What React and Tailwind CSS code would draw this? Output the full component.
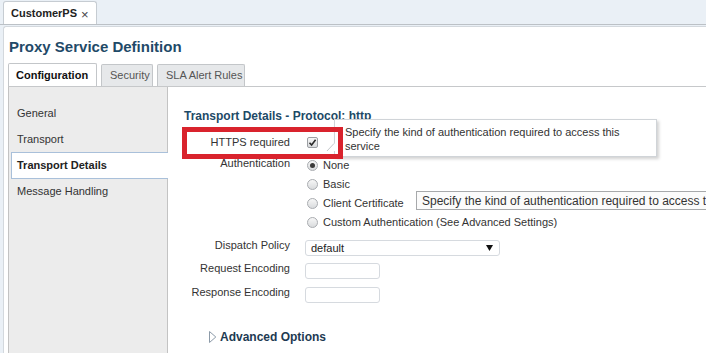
import React from "react";

function Radio({ checked }) {
  return (
    <span className="relative w-[11px] h-[11px] rounded-full border border-[#a9acb0] bg-gradient-to-b from-[#f7f7f7] to-[#d9dbdd] flex items-center justify-center shrink-0">
      {checked && <span className="w-[5px] h-[5px] rounded-full bg-[#3a3a3a]" />}
    </span>
  );
}

function RadioRow({ label, checked }) {
  return (
    <div className="h-[19px] flex items-center">
      <Radio checked={checked} />
      <span className="ml-[5px] text-[11px] text-[#333] whitespace-nowrap">{label}</span>
    </div>
  );
}

export default function App() {
  return (
    <div className="relative w-[706px] h-[353px] overflow-hidden bg-[#eaf0f6] flex flex-col text-[11px] text-[#333] font-['Liberation_Sans',Arial,sans-serif]">
      {/* top document tab strip */}
      <div className="h-[25px] shrink-0 border-b border-[#bcc1c6] flex items-end pl-[3px]">
        <div className="h-[23px] w-[94px] bg-white border border-b-0 border-[#c6ccd2] rounded-t-[3px] flex items-center pl-[7px]">
          <span className="font-bold text-[11px] text-[#222]">CustomerPS</span>
          <span className="ml-[4px] text-[13px] leading-none text-[#444] mt-[2px]">×</span>
        </div>
      </div>

      {/* main white container */}
      <div className="flex-1 ml-[3px] mt-px bg-white border-l border-t border-[#d3d8dd] rounded-tl-[3px] flex flex-col min-h-0">
        <div className="pl-[5px] pt-[10px] h-[30px] text-[15px] leading-[20px] font-bold text-[#1f4a68] whitespace-nowrap">
          Proxy Service Definition
        </div>

        {/* tabs */}
        <div className="flex items-end gap-[4px] pl-[4px] mt-[6px] h-[23px]">
          <div className="w-[89px] h-[23px] bg-white border border-b-0 border-[#c3c6c9] rounded-t-[2px] flex items-center pl-[7px] font-bold text-[#111]">
            Configuration
          </div>
          <div className="w-[52px] h-[22px] bg-[#e6e8ea] border border-b-0 border-[#c3c6c9] rounded-t-[2px] flex items-center pl-[8px] text-[#555]">
            Security
          </div>
          <div className="w-[88px] h-[22px] bg-[#e6e8ea] border border-b-0 border-[#c3c6c9] rounded-t-[2px] flex items-center pl-[8px] text-[#555] whitespace-nowrap">
            SLA Alert Rules
          </div>
        </div>

        {/* panel */}
        <div className="flex-1 flex ml-[4px] border-t border-[#c6c8ca] min-h-0">
          <div className="w-[160px] shrink-0 bg-[#ececec] border-l border-r border-[#c3c3c3] pt-[13px] flex flex-col">
            <div className="h-[26px] flex items-center pl-[8px]">General</div>
            <div className="h-[26px] flex items-center pl-[8px]">Transport</div>
            <div className="h-[27px] ml-[2px] -mr-px bg-white border border-r-0 border-[#a9c0da] flex items-center pl-[5px] font-bold text-[#222]">
              Transport Details
            </div>
            <div className="h-[26px] -mt-px flex items-center pl-[8px]">Message Handling</div>
          </div>

          <div className="flex-1 pl-[16px] flex flex-col">
            <div className="mt-[22px] h-[14px] leading-[14px] text-[12px] font-bold text-[#1d4a67] whitespace-nowrap">
              Transport Details - Protocol: http
            </div>

            {/* HTTPS required */}
            <div className="mt-[8px] h-[22px] flex items-center">
              <div className="w-[106px] text-right leading-[14px] text-[#333]">HTTPS required</div>
              <div className="ml-[17px] w-[11px] h-[11px] rounded-[2px] border border-[#9c9fa3] bg-gradient-to-b from-[#f6f6f6] to-[#d8dadc] flex items-center justify-center">
                <svg width="9" height="9" viewBox="0 0 9 9">
                  <path d="M1.5 4.8 L3.6 7 L7.6 1.8" fill="none" stroke="#2b2b2b" strokeWidth="1.6" />
                </svg>
              </div>
            </div>

            {/* Authentication */}
            <div className="mt-[3px] flex items-start">
              <div className="w-[106px] text-right leading-[14px] text-[#333]">Authentication</div>
              <div className="ml-[17px] flex flex-col">
                <RadioRow label="None" checked />
                <RadioRow label="Basic" />
                <RadioRow label="Client Certificate" />
                <RadioRow label="Custom Authentication (See Advanced Settings)" />
              </div>
            </div>

            {/* Dispatch Policy */}
            <div className="mt-[6px] flex items-start">
              <div className="w-[106px] text-right leading-[14px] text-[#333]">Dispatch Policy</div>
              <div className="ml-[15px] mt-[2px] w-[195px] h-[16px] border border-[#d6dadf] rounded-[3px] bg-white flex items-center justify-between pl-[5px] pr-[6px]">
                <span className="text-[#222] leading-[14px]">default</span>
                <svg width="7" height="6" viewBox="0 0 7 6">
                  <path d="M0 0 H7 L3.5 6 Z" fill="#111" />
                </svg>
              </div>
            </div>

            {/* Request Encoding */}
            <div className="mt-[5px] flex items-start">
              <div className="w-[106px] text-right leading-[14px] text-[#333]">Request Encoding</div>
              <div className="ml-[15px] mt-[2px] w-[75px] h-[16px] border border-[#d6dadf] rounded-[3px] bg-white" />
            </div>

            {/* Response Encoding */}
            <div className="mt-[6px] flex items-start">
              <div className="w-[106px] text-right leading-[14px] text-[#333]">Response Encoding</div>
              <div className="ml-[15px] mt-[2px] w-[75px] h-[16px] border border-[#d6dadf] rounded-[3px] bg-white" />
            </div>

            {/* Advanced Options */}
            <div className="mt-[27px] ml-[25px] flex items-center h-[14px]">
              <svg width="8" height="12" viewBox="0 0 8 12">
                <path d="M0.5 0.5 L6.8 6 L0.5 11.5 Z" fill="#fff" stroke="#8c9aa8" strokeWidth="1" />
              </svg>
              <span className="ml-[3px] text-[12px] font-bold text-[#1d3a52] whitespace-nowrap">Advanced Options</span>
            </div>
          </div>
        </div>
      </div>

      {/* overlay: first tooltip */}
      <div className="absolute left-[334px] top-[119px] w-[323px] h-[38px] bg-white border border-[#d0d4d8] shadow-[2px_2px_3px_rgba(0,0,0,0.18)] pl-[10px] pt-[5px] text-[11px] leading-[14px] text-[#333]">
        <div>Specify the kind of authentication required to access this</div>
        <div>service</div>
      </div>
      <svg className="absolute left-[322px] top-[140px]" width="16" height="20" viewBox="0 0 16 20">
        <path d="M13 3 L5 11 L13 11 Z" fill="#fff" />
        <path d="M12 3.5 L5 11" stroke="#c4c8cc" strokeWidth="1" fill="none" />
      </svg>

      {/* overlay: red highlight box */}
      <div className="absolute left-[182px] top-[127px] w-[161px] h-[32px] border-[5px] border-[#d9232d]" />

      {/* overlay: second tooltip */}
      <div className="absolute left-[416px] top-[191px] w-[320px] h-[19px] bg-[#fbfbfb] border border-[#a7a9ab] pl-[5px] flex items-center text-[12px] text-[#333] whitespace-nowrap">
        Specify the kind of authentication required to access this service
      </div>
    </div>
  );
}
